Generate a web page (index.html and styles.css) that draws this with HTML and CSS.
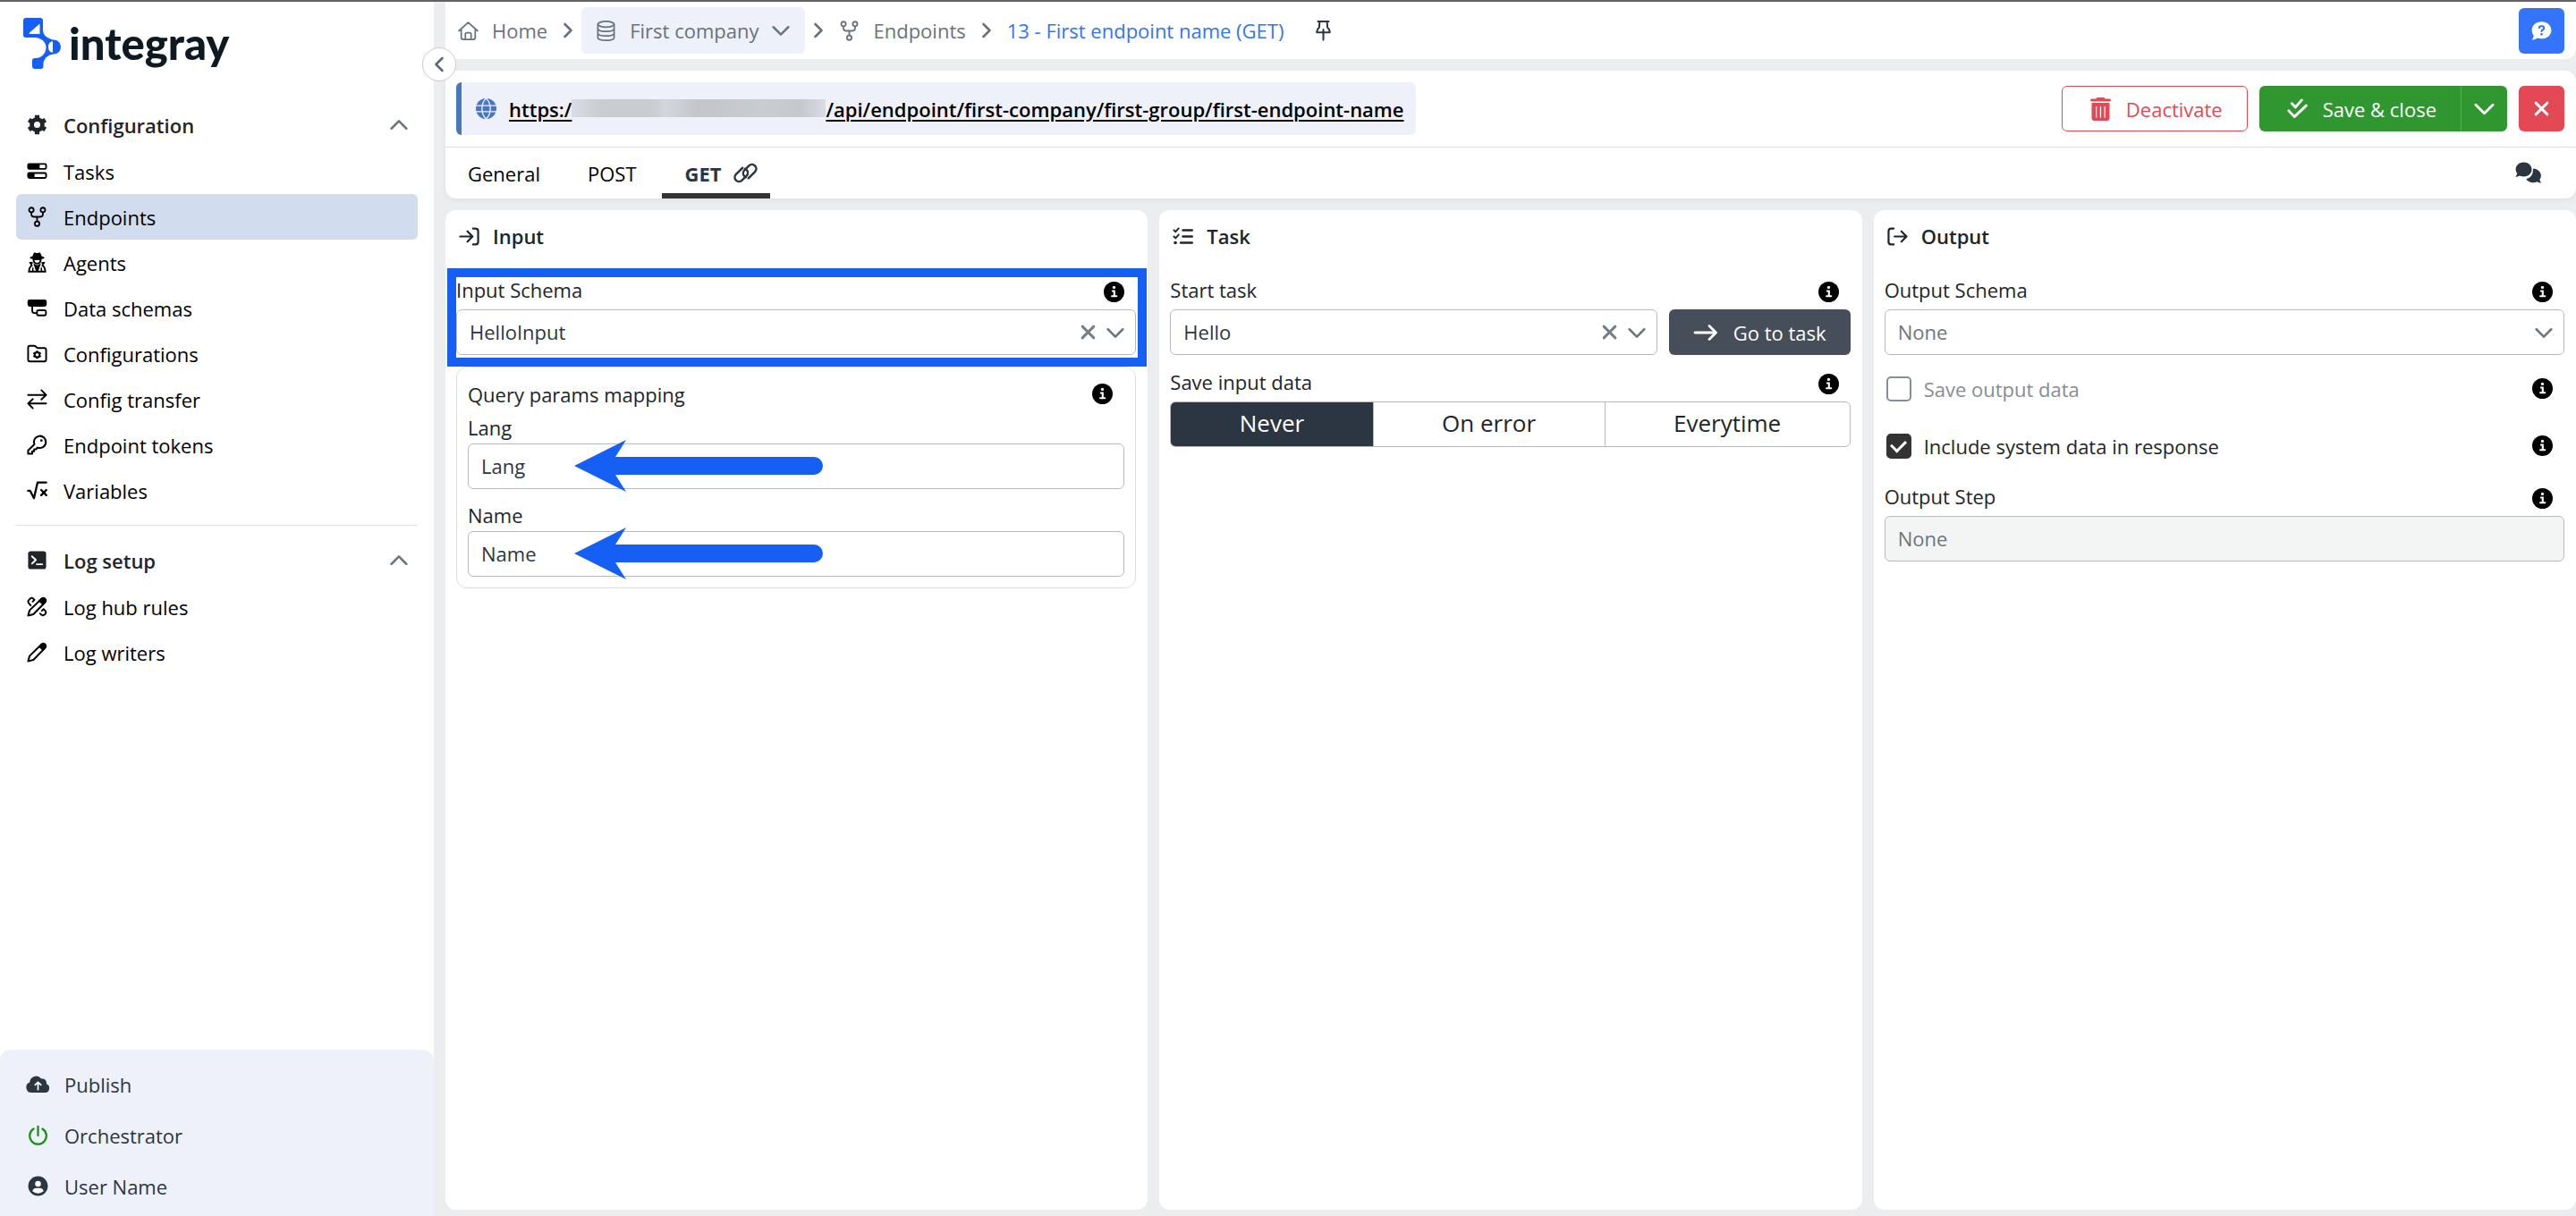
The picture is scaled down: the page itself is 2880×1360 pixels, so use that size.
FILE: index.html
```html
<!DOCTYPE html>
<html lang="en">
<head>
<meta charset="utf-8">
<title>Integray - First endpoint name (GET)</title>
<link rel="stylesheet" href="styles.css">
</head>
<body>
<svg class="sprite" aria-hidden="true">
  <symbol id="gear" viewBox="0 0 24 24"><g stroke="currentColor" fill="none"><circle cx="12" cy="12" r="6.2" stroke-width="5"/><path stroke-width="5.4" stroke-linejoin="round" d="M12 .8v4M12 19.2v4M2.3 6.4l3.4 2M18.3 15.6l3.4 2M2.3 17.6l3.4-2M18.3 8.4l3.4-2"/></g></symbol>
  <symbol id="tasks" viewBox="0 0 24 24"><g fill="none" stroke="currentColor" stroke-width="2"><rect x="1.500" y="3.500" width="21" height="5.8" rx="1.6"/><rect x="1.500" y="14" width="21" height="5.8" rx="1.6"/></g><path fill="currentColor" d="M2 4h13v5.400H2zM2 14h7v5.400H2z"/></symbol>
  <symbol id="fork" viewBox="0 0 24 24"><g fill="none" stroke="currentColor" stroke-width="1.9"><circle cx="5.3" cy="4" r="2.7"/><circle cx="18.7" cy="4" r="2.7"/><circle cx="12" cy="20" r="2.7"/><path d="M5.3 6.8v2.4q0 2.8 2.8 2.8h7.8q2.8 0 2.8-2.8V6.8M12 12v5.2"/></g></symbol>
  <symbol id="agent" viewBox="0 0 24 24"><path fill="currentColor" d="M8.2.8c1-.8 2 .3 3.8.3s2.800-1.100 3.800-.3L17.500 5c2 .4 3 .9 3 1.500 0 .8-1.500 1.300-3.300 1.600.2 3.600-2 6.200-5.200 6.200S6.600 11.700 6.800 8.100C5 7.800 3.500 7.300 3.500 6.500c0-.6 1-1.100 3-1.500z"/><path fill="#fff" d="M8.800 9q1.700 1 3.200 0 1.500 1 3.200 0-.5 3.300-3.200 3.300T8.800 9z"/><path fill="none" stroke="currentColor" stroke-width="2" d="M6.800 12.500H4.200l1.600 3.200q-3.300 2-3.300 7h19q0-5-3.300-7l1.600-3.200h-2.600"/><path fill="currentColor" d="M7.500 13l3.300 9.500h2.400L16.500 13 12 15.500z"/><path stroke="currentColor" stroke-width="1.600" d="M7 18v4.500M17 18v4.500"/></symbol>
  <symbol id="schema" viewBox="0 0 24 24"><rect x=".8" y="2" width="22.400" height="8.400" rx="2.600" fill="currentColor"/><g fill="none" stroke="currentColor" stroke-width="1.900"><path d="M6.300 10v5q0 2.800 2.800 2.800h2.400"/><rect x="11.800" y="14.600" width="10.500" height="6" rx="1.800"/></g></symbol>
  <symbol id="folder" viewBox="0 0 24 24"><path fill="none" stroke="currentColor" stroke-width="2" stroke-linejoin="round" d="M1.500 19V5q0-2.200 2.200-2.200h4.800q1 0 1.800.8l1.300 1.300q.7.600 1.600.6H20.300q2.200 0 2.200 2.200V19q0 2.200-2.200 2.200H3.700q-2.200 0-2.200-2.200z"/><circle cx="12" cy="13.300" r="2.900" fill="none" stroke="currentColor" stroke-width="2"/><path stroke="currentColor" stroke-width="2.400" d="M12 8.500v2M12 16v2M7.800 10.900l1.800 1M14.400 14.700l1.800 1M7.800 15.700l1.800-1M14.400 11.900l1.800-1"/></symbol>
  <symbol id="transfer" viewBox="0 0 24 24"><path fill="none" stroke="currentColor" stroke-width="2" stroke-linecap="round" stroke-linejoin="round" d="M1.500 7h21M17 1.500L22.500 7 17 12.300M22.500 17h-21M7 11.800L1.500 17 7 22.500"/></symbol>
  <symbol id="key" viewBox="0 0 24 24"><path fill="none" stroke="currentColor" stroke-width="2.100" stroke-linejoin="round" d="M8.800 11.500A7 7 0 1 1 12.600 15.200L10.700 17.200H8.500v2.400H6.300V22.500H1.500V18.600z"/><circle cx="17" cy="7" r="1.400" fill="currentColor"/></symbol>
  <symbol id="root" viewBox="0 0 26 24"><path fill="none" stroke="currentColor" stroke-linecap="round" stroke-linejoin="round" stroke-width="2.600" d="M1.500 12.500h2.700L9 22l4.500-20H24.500M18.200 11.500l6.400 6.600M24.600 11.500l-6.400 6.600"/></symbol>
  <symbol id="terminal" viewBox="0 0 24 24"><rect x="1.500" y="1.500" width="21" height="21" rx="3" fill="currentColor"/><path fill="none" stroke="#fff" stroke-width="2" stroke-linecap="round" stroke-linejoin="round" d="M6 7.500l4.500 4.300L6 16M11.500 16.800h6.500"/></symbol>
  <symbol id="pen" viewBox="0 0 24 24"><path fill="none" stroke="currentColor" stroke-width="2.100" stroke-linejoin="round" d="M1.500 22.500l1.700-6.200L17 2.800q2-1.500 4 .3 1.500 2 .2 4L7.700 20.800z"/><path fill="currentColor" d="M13.500 5.500l3.500-3.700q2.500-2 5 .2 2.200 2.300.4 4.800L18.700 10.500z"/></symbol>
  <symbol id="rules" viewBox="0 0 24 24"><path fill="none" stroke="currentColor" stroke-width="2.100" stroke-linejoin="round" d="M1.500 22.500l1.700-6.200L17 2.800q2-1.500 4 .3 1.500 2 .2 4L7.700 20.800z"/><path fill="currentColor" d="M13.500 5.500l3.500-3.700q2.500-2 5 .2 2.200 2.300.4 4.800L18.700 10.500z"/><path fill="none" stroke="currentColor" stroke-width="2" stroke-linecap="round" d="M4.500 10.500L2.300 8q-1.600-2 .2-4l1.200-1.200q2-1.800 4 0L8.800 4.200 6.800 6.200M15.500 20l1.400 1.500q1.800 1.500 3.600 0l1-1q1.500-1.800 0-3.600l-2-2-2 2"/></symbol>
  <symbol id="cloud" viewBox="0 0 28 24"><path fill="currentColor" d="M6.500 22A6.200 6.200 0 0 1 4.300 10 7.500 7.500 0 0 1 17.800 5.800a5 5 0 0 1 6 6A5.300 5.300 0 0 1 22.500 22z"/><path fill="none" stroke="#fff" stroke-width="1.800" stroke-linecap="round" stroke-linejoin="round" d="M14 18.500V10M10.600 13L14 9.700l3.400 3.300"/></symbol>
  <symbol id="power" viewBox="0 0 24 24"><path fill="none" stroke="currentColor" stroke-width="2.400" stroke-linecap="round" d="M12 2v10.500M6.800 4.700A9.700 9.700 0 1 0 17.200 4.700"/></symbol>
  <symbol id="user" viewBox="0 0 24 24"><circle cx="12" cy="12" r="11.400" fill="currentColor"/><circle cx="12" cy="9.300" r="3.400" fill="#fff"/><path fill="#fff" d="M5.500 18q.8-3.700 4.500-3.700h4q3.700 0 4.500 3.700-2.700 2.500-6.500 2.500T5.500 18z"/></symbol>
  <symbol id="home" viewBox="0 0 25 24"><path fill="none" stroke="currentColor" stroke-width="1.900" stroke-linecap="round" stroke-linejoin="round" d="M1.200 12L12.500 1.800 23.800 12M4 10v10q0 2.500 2.500 2.500h12q2.500 0 2.500-2.500V10M9 22.500V16q0-1.800 1.800-1.800h3.400Q16 14.200 16 16v6.500"/></symbol>
  <symbol id="database" viewBox="0 0 22 24"><g fill="none" stroke="currentColor" stroke-width="1.800"><ellipse cx="11" cy="4.300" rx="9.500" ry="3.400"/><path d="M1.500 4.300v15.400c0 4.500 19 4.500 19 0V4.300M1.500 9.300c0 4.500 19 4.500 19 0M1.500 14.500c0 4.500 19 4.500 19 0"/></g></symbol>
  <symbol id="pin" viewBox="0 0 18 26"><path fill="none" stroke="currentColor" stroke-width="2.200" stroke-linecap="round" stroke-linejoin="round" d="M2.500 2.200h13M4.500 2.500L4 9.500Q1.200 11.500 1.200 15.500h15.600q0-4-2.800-6l-.5-7M9 12v12.500"/></symbol>
  <symbol id="down" viewBox="0 0 24 24"><path fill="none" stroke="currentColor" stroke-width="3" stroke-linecap="round" stroke-linejoin="round" d="M2 7.500l10 10 10-10"/></symbol>
  <symbol id="right" viewBox="0 0 12 20"><path fill="none" stroke="currentColor" stroke-width="2.600" stroke-linecap="round" stroke-linejoin="round" d="M2.500 3l7 7-7 7"/></symbol>
  <symbol id="cross" viewBox="0 0 24 24"><path fill="none" stroke="currentColor" stroke-width="4" stroke-linecap="round" d="M3 3l18 18M21 3L3 21"/></symbol>
  <symbol id="globe" viewBox="0 0 24 24"><circle cx="12" cy="12" r="12" fill="currentColor"/><path fill="none" stroke="#eef1f9" stroke-width="1.400" d="M0 8.500h24M0 15.500h24M12 0C5.500 6 5.500 18 12 24M12 0C18.500 6 18.500 18 12 24"/></symbol>
  <symbol id="link" viewBox="0 0 28 24"><path fill="none" stroke="currentColor" stroke-width="2.600" stroke-linecap="round" d="M10.500 6L6.500 10l-3.600 3.500a5 5 0 0 0 0 7 5 5 0 0 0 7 0l5.300-5.300a5 5 0 0 0 0-7q-.7-.7-1.700-1.100M17.500 18l3.900-3.900 3.600-3.600a5 5 0 0 0 0-7 5 5 0 0 0-7 0l-5.300 5.300a5 5 0 0 0 0 7q.7.700 1.700 1.100"/></symbol>
  <symbol id="help" viewBox="0 0 26 24"><path fill="currentColor" d="M13 .5c7 0 12.300 4.800 12.300 10.800S20 22 13 22q-2.800 0-5.200-.9Q5.500 23.300.8 23.500q2-2.200 2.300-5.200Q.7 15.300.7 11.300C.7 5.300 6 .5 13 .5z"/><path fill="none" stroke="#3474fb" stroke-width="2.300" stroke-linecap="round" d="M10 8.300q0-2.300 2.300-2.300h1.400q2.400 0 2.400 2.300 0 1.500-1.500 2.300-1.600.8-1.600 2.100"/><circle cx="13" cy="16.300" r="1.500" fill="#3474fb"/></symbol>
  <symbol id="trash" viewBox="0 0 23 26"><path fill="currentColor" fill-rule="evenodd" d="M1.500 1.500H6.500L7.500 0h8l1 1.500h5q1.500 0 1.500 1.500t-1.500 1.500h-20Q0 4.500 0 3t1.500-1.500zM1.500 6h20v17q0 3-3 3h-14q-3 0-3-3zM6 10v12.500h1.300V10zM10.800 10v12.500h1.300V10zM15.600 10v12.500h1.300V10z"/></symbol>
  <symbol id="checks" viewBox="0 0 24 24"><path fill="none" stroke="currentColor" stroke-width="3" stroke-linecap="round" stroke-linejoin="round" d="M5.500 6l4.300 4.300L17 2M2 14.500l6.500 7L22.300 8.500"/></symbol>
  <symbol id="chats" viewBox="0 0 30 24"><path fill="currentColor" d="M9.500.5c5 0 9 3.300 9 8 0 4.500-4 8-9 8q-2.400 0-4.400-.9-2 1.200-4.900 1.200 1.700-1.800 2-4Q.6 11 .6 8.500c0-4.700 4-8 8.900-8zM20 7.600c5 .2 8.900 3.600 8.900 7.900q0 2.300-1.500 4.200.2 2.200 2 3.800-2.900 0-4.900-1.200-2 .9-4.400.9-5 0-7.800-4 7.500-2 7.700-10.200z"/></symbol>
  <symbol id="signin" viewBox="0 0 24 24"><path fill="none" stroke="currentColor" stroke-width="2.300" stroke-linecap="round" stroke-linejoin="round" d="M1.500 12h14M10 6l6 6-6 6M16.500 2.700H19.500q3 0 3 3v12.600q0 3-3 3H16.500"/></symbol>
  <symbol id="signout" viewBox="0 0 24 24"><path fill="none" stroke="currentColor" stroke-width="2.300" stroke-linecap="round" stroke-linejoin="round" d="M8.500 12h14M16.500 6l6 6-6 6M7.500 2.700H4.500q-3 0-3 3v12.600q0 3 3 3H7.500"/></symbol>
  <symbol id="list" viewBox="0 0 24 24"><path fill="none" stroke="currentColor" stroke-width="2.600" stroke-linecap="round" stroke-linejoin="round" d="M12 4.700h10.700M12 12h10.700M9.500 19.300h13.200"/><path fill="none" stroke="currentColor" stroke-width="2" stroke-linecap="round" stroke-linejoin="round" d="M1.500 4.500l2 2 3.500-4M1.500 12l2 2L7 10"/><circle cx="3.200" cy="19.300" r="1.900" fill="currentColor"/></symbol>
  <symbol id="info" viewBox="0 0 24 24"><circle cx="12" cy="12" r="12" fill="#000"/><circle cx="12" cy="6.700" r="1.700" fill="#fff"/><path fill="none" stroke="#fff" stroke-width="2.200" stroke-linecap="round" d="M10.300 10.900h2v6M9.500 17h5.400"/></symbol>
  <symbol id="arrow" viewBox="0 0 28 24"><path fill="none" stroke="currentColor" stroke-width="2.800" stroke-linecap="round" stroke-linejoin="round" d="M2 12h23M18 4.500l7.500 7.500-7.500 7.500"/></symbol>
  <symbol id="pointer" viewBox="0 0 278 58"><path fill="#155ff4" d="M0 29L58 0 46 19H268a10 10 0 0 1 0 20H46L58 58z"/></symbol>
</svg>

<div class="app">
  <aside class="sidebar">
    <a class="brand" href="#">
      <svg class="brand-mark" viewBox="0 0 42 57" aria-hidden="true"><path fill="#155ff4" d="M3 0H19q3 0 3 3V13c0 7 5 9.500 11 11.500h1a8 8 0 0 1 0 16.000c-7 .5-11.500 6-11.500 11V54q0 3-3 3H13q-3 0-3-3V48q0-3 3-3h1c7 0 11.500-6 11.500-12S20 22 13 22H3q-3 0-3-3V3q0-3 3-3z"/><path fill="#fff" d="M18.500 6.500V18H7q-1 0 0-1.500zM33 26.200q-5 .6-5 6.300t5 6.300z"/></svg>
      <span class="brand-name">integray</span>
    </a>
    <nav class="menu">
      <button class="menu-head"><svg class="icon"><use href="#gear"/></svg><span>Configuration</span><svg class="caret up"><use href="#down"/></svg></button>
      <a class="menu-item" href="#"><svg class="icon"><use href="#tasks"/></svg>Tasks</a>
      <a class="menu-item active" href="#"><svg class="icon"><use href="#fork"/></svg>Endpoints</a>
      <a class="menu-item" href="#"><svg class="icon"><use href="#agent"/></svg>Agents</a>
      <a class="menu-item" href="#"><svg class="icon"><use href="#schema"/></svg>Data schemas</a>
      <a class="menu-item" href="#"><svg class="icon"><use href="#folder"/></svg>Configurations</a>
      <a class="menu-item" href="#"><svg class="icon"><use href="#transfer"/></svg>Config transfer</a>
      <a class="menu-item" href="#"><svg class="icon"><use href="#key"/></svg>Endpoint tokens</a>
      <a class="menu-item" href="#"><svg class="icon"><use href="#root"/></svg>Variables</a>
      <hr class="menu-rule">
      <button class="menu-head"><svg class="icon"><use href="#terminal"/></svg><span>Log setup</span><svg class="caret up"><use href="#down"/></svg></button>
      <a class="menu-item" href="#"><svg class="icon"><use href="#rules"/></svg>Log hub rules</a>
      <a class="menu-item" href="#"><svg class="icon"><use href="#pen"/></svg>Log writers</a>
    </nav>
    <div class="account">
      <a class="account-item" href="#"><svg class="icon wide"><use href="#cloud"/></svg>Publish</a>
      <a class="account-item" href="#"><svg class="icon wide green"><use href="#power"/></svg>Orchestrator</a>
      <a class="account-item" href="#"><svg class="icon wide"><use href="#user"/></svg>User Name</a>
    </div>
    <button class="collapse" aria-label="Collapse sidebar"><svg><use href="#right"/></svg></button>
  </aside>

  <main class="main">
    <header class="topbar">
      <nav class="crumbs">
        <a class="crumb" href="#"><svg class="icon"><use href="#home"/></svg>Home</a>
        <svg class="sep"><use href="#right"/></svg>
        <button class="company"><svg class="icon"><use href="#database"/></svg>First company<svg class="caret"><use href="#down"/></svg></button>
        <svg class="sep"><use href="#right"/></svg>
        <a class="crumb" href="#"><svg class="icon"><use href="#fork"/></svg>Endpoints</a>
        <svg class="sep"><use href="#right"/></svg>
        <a class="crumb current" href="#">13 - First endpoint name (GET)</a>
        <button class="pin" aria-label="Pin"><svg><use href="#pin"/></svg></button>
      </nav>
      <button class="square blue" aria-label="Help"><svg class="icon"><use href="#help"/></svg></button>
    </header>

    <section class="endpoint">
      <div class="endpoint-bar">
        <div class="url"><svg class="icon"><use href="#globe"/></svg><a href="#">https:/<span class="redacted"></span>/api/endpoint/first-company/first-group/first-endpoint-name</a></div>
        <div class="actions">
          <button class="btn outline"><svg class="trash"><use href="#trash"/></svg>Deactivate</button>
          <div class="split">
            <button class="btn green-bg"><svg class="icon"><use href="#checks"/></svg>Save &amp; close</button>
            <button class="square green-bg" aria-label="More save options"><svg class="icon"><use href="#down"/></svg></button>
          </div>
          <button class="square red" aria-label="Close"><svg class="x"><use href="#cross"/></svg></button>
        </div>
      </div>
      <div class="tabs">
        <button class="tab">General</button>
        <button class="tab">POST</button>
        <button class="tab selected">GET<svg><use href="#link"/></svg></button>
        <button class="chat" aria-label="Comments"><svg><use href="#chats"/></svg></button>
      </div>
    </section>

    <div class="columns">
      <section class="panel">
        <h2><svg class="icon"><use href="#signin"/></svg>Input</h2>
        <div class="field marked">
          <div class="label-row"><label for="input-schema">Input Schema</label><svg class="info"><use href="#info"/></svg></div>
          <div class="control">
            <select id="input-schema"><option>HelloInput</option></select>
            <div class="adorn"><svg class="x"><use href="#cross"/></svg><svg class="caret"><use href="#down"/></svg></div>
          </div>
        </div>
        <div class="group">
          <div class="group-row"><span>Query params mapping</span><svg class="info"><use href="#info"/></svg></div>
          <label class="group-label" for="lang">Lang</label>
          <div class="control"><input id="lang" type="text" value="Lang"><svg class="pointer"><use href="#pointer"/></svg></div>
          <label class="group-label next" for="name">Name</label>
          <div class="control"><input id="name" type="text" value="Name"><svg class="pointer"><use href="#pointer"/></svg></div>
        </div>
      </section>

      <section class="panel">
        <h2><svg class="icon"><use href="#list"/></svg>Task</h2>
        <div class="field">
          <div class="label-row"><label for="start-task">Start task</label><svg class="info"><use href="#info"/></svg></div>
          <div class="task-row">
            <div class="control">
              <select id="start-task"><option>Hello</option></select>
              <div class="adorn"><svg class="x"><use href="#cross"/></svg><svg class="caret"><use href="#down"/></svg></div>
            </div>
            <button class="btn slate"><svg class="arrow"><use href="#arrow"/></svg>Go to task</button>
          </div>
        </div>
        <div class="field">
          <div class="label-row"><span id="save-input">Save input data</span><svg class="info"><use href="#info"/></svg></div>
          <div class="segments" role="radiogroup" aria-labelledby="save-input">
            <label><input type="radio" name="save" checked><span>Never</span></label>
            <label><input type="radio" name="save"><span>On error</span></label>
            <label><input type="radio" name="save"><span>Everytime</span></label>
          </div>
        </div>
      </section>

      <section class="panel">
        <h2><svg class="icon"><use href="#signout"/></svg>Output</h2>
        <div class="field">
          <div class="label-row"><label for="output-schema">Output Schema</label><svg class="info"><use href="#info"/></svg></div>
          <div class="control">
            <select id="output-schema" class="empty"><option>None</option></select>
            <div class="adorn"><svg class="caret"><use href="#down"/></svg></div>
          </div>
        </div>
        <div class="check-row"><input type="checkbox" id="save-output" disabled><label for="save-output">Save output data</label><svg class="info"><use href="#info"/></svg></div>
        <div class="check-row"><input type="checkbox" id="system-data" checked><label for="system-data">Include system data in response</label><svg class="info"><use href="#info"/></svg></div>
        <div class="field">
          <div class="label-row"><label for="output-step">Output Step</label><svg class="info"><use href="#info"/></svg></div>
          <div class="control"><input id="output-step" type="text" value="None" disabled></div>
        </div>
      </section>
    </div>
  </main>
</div>
</body>
</html>
```

FILE: styles.css
```css
* { box-sizing: border-box; }

body {
  margin: 0;
  background: #ebedef;
  color: #212529;
  font: 22px/34px "Open Sans", "Noto Sans", sans-serif;
}

button, input, select { font: inherit; color: inherit; margin: 0; }
button { border: 0; background: none; padding: 0; cursor: pointer; }
a { color: inherit; text-decoration: none; }
svg { flex: none; display: block; overflow: visible; }
.sprite { position: absolute; width: 0; height: 0; overflow: hidden; }
.icon { width: 23px; height: 23px; }
.caret { width: 20px; height: 20px; color: #6c757d; }
.caret.up { transform: rotate(180deg); }
.x { width: 17px; height: 17px; }

.app {
  display: grid;
  grid-template-columns: 485px 1fr;
  column-gap: 13px;
  min-height: 100vh;
  border-top: 2px solid #636163;
}

/* Sidebar */
.sidebar {
  position: relative;
  display: flex;
  flex-direction: column;
  background: #fff;
}
.brand { display: flex; align-items: center; gap: 9px; height: 90px; padding: 2px 26px 0; }
.brand-mark { width: 42px; height: 57px; }
.brand-name { font: 900 49px/56px Lato, sans-serif; color: #0e1a22; }
.menu { display: flex; flex-direction: column; padding: 22px 18px 0; }
.menu-head, .menu-item {
  display: flex;
  align-items: center;
  gap: 18px;
  height: 51px;
  padding: 0 12px;
  border-radius: 6px;
}
.menu-head { font-weight: 600; padding-right: 11px; text-align: left; margin-bottom: 1px; }
.menu-head span { flex: 1; }
.menu-item { color: #000; }
.menu-item.active { background: #d2dcef; }
.menu-rule { align-self: stretch; height: 1px; margin: 13px 0; border: 0; background: #dcdee0; }
.account {
  margin-top: auto;
  padding: 10px 28px 5px;
  border-radius: 12px 12px 0 0;
  background: #eef1f9;
  color: #2c3643;
}
.account-item { display: flex; align-items: center; gap: 15px; height: 57px; }
.wide { width: 29px; }
.green { color: #1c8f1c; }
.collapse {
  position: absolute;
  top: 51px;
  right: -25px;
  display: grid;
  place-items: center;
  width: 38px;
  height: 38px;
  border: 1px solid #c8cbce;
  border-radius: 50%;
  background: #fff;
  color: #5f6973;
}
.collapse svg { width: 12px; height: 20px; transform: rotate(180deg); }

/* Top bar */
.main { display: flex; flex-direction: column; gap: 13px; min-width: 0; padding-bottom: 7px; }
.topbar {
  display: flex;
  align-items: center;
  justify-content: space-between;
  height: 64px;
  padding: 0 13px 0 14px;
  border-radius: 0 0 12px 0;
  background: #fff;
}
.crumbs { display: flex; align-items: center; color: #69727b; }
.crumb { display: flex; align-items: center; gap: 15px; }
.current { color: #3474f5; }
.sep { width: 12px; height: 20px; margin: 0 17px; }
.company {
  display: flex;
  align-items: center;
  gap: 15px;
  height: 52px;
  margin: 0 -8px;
  padding: 0 17px 0 16px;
  border-radius: 6px;
  background: #eef1f9;
}
.pin { margin-left: 36px; color: #2c3643; }
.pin svg { width: 17px; height: 24px; }
.square { display: grid; place-items: center; width: 51px; height: 51px; border-radius: 6px; color: #fff; }
.blue { background: #3474fb; }
.red { background: #e34854; }

/* Endpoint card */
.endpoint { border-radius: 0 12px 12px 12px; background: #fff; box-shadow: 0 2px 6px #0000000d; }
.endpoint-bar {
  display: flex;
  align-items: center;
  justify-content: space-between;
  padding: 13px 13px 13px 12px;
  border-bottom: 1px solid #dcdee0;
}
.url {
  display: flex;
  align-items: center;
  gap: 14px;
  height: 59px;
  padding: 0 13px 0 16px;
  border-left: 6px solid #4876c0;
  border-radius: 6px;
  background: #eef1f9;
  color: #000;
  font-weight: 600;
}
.url .icon { color: #4876c0; }
.url a { text-decoration: underline; text-decoration-thickness: 2px; text-underline-offset: 3px; }
.redacted {
  display: inline-block;
  width: 284px;
  height: 20px;
  background: linear-gradient(90deg, #d9dce3, #c9ccd1 12%, #c9ccd1 32%, #d3d6dd 37%, #c3c5ca 50%, #c9ccd1 75%, #c5c8cd 90%, #d9dce3);
}
.actions { display: flex; gap: 13px; }
.btn {
  display: flex;
  align-items: center;
  justify-content: center;
  gap: 17px;
  height: 51px;
  padding: 0 27px;
  border-radius: 6px;
  color: #fff;
}
.outline { border: 1px solid #e34854; color: #e34854; padding-left: 31px; }
.trash { width: 23px; height: 26px; }
.split { display: flex; }
.split .btn { border-radius: 6px 0 0 6px; padding-left: 31px; }
.split .square { border-left: 1px solid #58a858; border-radius: 0 6px 6px 0; width: 52px; }
.green-bg { background: #309630; }
.slate { background: #454e59; }
.arrow { width: 28px; height: 24px; }
.tabs { display: flex; align-items: stretch; height: 57px; }
.tab { display: flex; align-items: center; gap: 13px; padding: 0 28px 0 25px; color: #000; }
.tab.selected { padding: 6px 14px 0 26px; border-bottom: 6px solid #333; color: #2c3643; font-weight: 700; }
.tab svg { width: 27px; height: 23px; }
.chat { display: grid; place-items: center; margin: 0 38px 2px auto; color: #2c3643; }
.chat svg { width: 30px; height: 24px; }

/* Panels */
.columns { flex: 1; display: grid; grid-template-columns: repeat(3, minmax(0, 1fr)); gap: 13px; }
.panel {
  display: flex;
  flex-direction: column;
  gap: 13px;
  padding: 12px 13px 12px 12px;
  border-radius: 12px;
  background: #fff;
}
h2 { display: flex; align-items: center; gap: 15px; height: 34px; margin: 0 0 13px; padding-left: 3px; font-size: 22px; font-weight: 600; }
.label-row, .group-row { display: flex; align-items: center; justify-content: space-between; padding-right: 13px; }
.label-row { height: 33px; margin-bottom: 6px; }
.label-row .info { align-self: flex-end; margin-bottom: 2px; }
.info { width: 23px; height: 23px; }
.field { position: relative; }
.marked::after {
  content: "";
  position: absolute;
  inset: -7px -12px -13px -10px;
  border: 10px solid #155ff4;
  pointer-events: none;
}
.control { position: relative; flex: 1; }
.control input, .control select {
  display: block;
  width: 100%;
  height: 51px;
  padding: 0 14px 2px;
  border: 1px solid #b8bbbe;
  border-radius: 6px;
  outline: 0;
  appearance: none;
  background: #fff;
  color: #2c3643;
}
.control .empty, .control input:disabled { color: #6c757d; }
.control input:disabled { background: #f3f5f5; }
.adorn {
  position: absolute;
  inset: 0 13px 0 auto;
  display: flex;
  align-items: center;
  gap: 12px;
  color: #757c84;
  pointer-events: none;
}
.group { padding: 12px; border: 1px solid #dcdee0; border-radius: 12px; }
.group-row { height: 37px; padding-bottom: 2px; }
.group-label { display: block; height: 36px; line-height: 36px; }
.group-label.next { margin-top: 11px; }
.pointer { position: absolute; top: -4px; left: 119px; width: 278px; height: 58px; }
.task-row { display: flex; gap: 13px; }
.segments { display: flex; height: 51px; border: 1px solid #b8bbbe; border-radius: 6px; overflow: hidden; font-size: 26px; }
.segments label { flex: 1 1 auto; display: grid; border-left: 1px solid #b8bbbe; cursor: pointer; }
.segments label:first-child { border-left: 0; }
.segments input { appearance: none; position: absolute; }
.segments span { display: grid; place-items: center; padding-bottom: 3px; }
.segments input:checked + span { background: #2c3643; color: #fff; }
.check-row { display: flex; align-items: center; gap: 14px; height: 51px; padding: 0 13px 2px 2px; }
.check-row label { flex: 1; }
.check-row input { appearance: none; display: grid; place-items: center; width: 28px; height: 28px; border: 2px solid #868d94; border-radius: 5px; background: #fff; }
.check-row input:checked { border-color: #333; background: #333; }
.check-row input:checked::after { content: ""; width: 8px; height: 13px; margin-bottom: 4px; border: solid #fff; border-width: 0 3px 3px 0; transform: rotate(45deg); }
.check-row input:disabled + label { color: #868d94; }
```
